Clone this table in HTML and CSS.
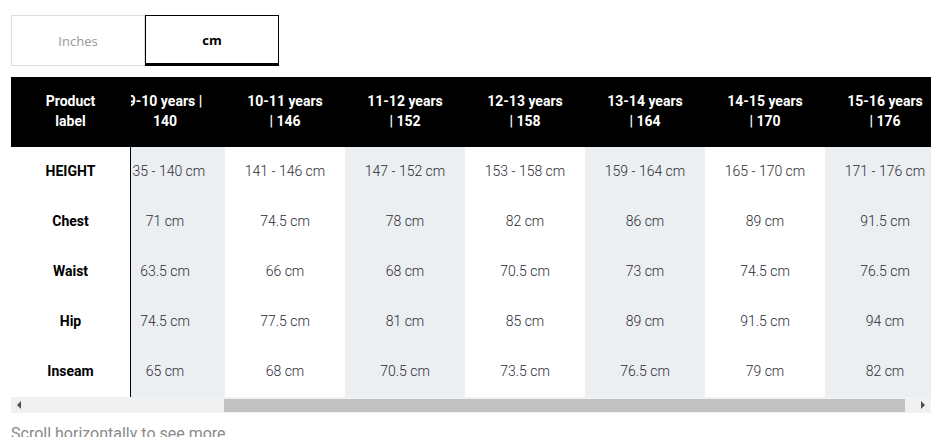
FILE: index.html
```html
<!DOCTYPE html>
<html lang="en">
<head>
<meta charset="utf-8">
<title>Size chart</title>
<link rel="stylesheet" href="styles.css">
</head>
<body>
<div class="page">
  <div class="toggle">
    <button class="opt">Inches</button>
    <button class="opt active">cm</button>
  </div>

  <div class="table">
    <div class="labels">
      <div class="hcell">Product<br>label</div>
      <div class="lcell">HEIGHT</div>
      <div class="lcell">Chest</div>
      <div class="lcell">Waist</div>
      <div class="lcell">Hip</div>
      <div class="lcell">Inseam</div>
    </div>
    <div class="viewport">
      <div class="cols">
        <div class="col grey">
          <div class="hcell">9-10 years |<br>140</div>
          <div class="cell">135 - 140 cm</div>
          <div class="cell">71 cm</div>
          <div class="cell">63.5 cm</div>
          <div class="cell">74.5 cm</div>
          <div class="cell">65 cm</div>
        </div>
        <div class="col">
          <div class="hcell">10-11 years<br>| 146</div>
          <div class="cell">141 - 146 cm</div>
          <div class="cell">74.5 cm</div>
          <div class="cell">66 cm</div>
          <div class="cell">77.5 cm</div>
          <div class="cell">68 cm</div>
        </div>
        <div class="col grey">
          <div class="hcell">11-12 years<br>| 152</div>
          <div class="cell">147 - 152 cm</div>
          <div class="cell">78 cm</div>
          <div class="cell">68 cm</div>
          <div class="cell">81 cm</div>
          <div class="cell">70.5 cm</div>
        </div>
        <div class="col">
          <div class="hcell">12-13 years<br>| 158</div>
          <div class="cell">153 - 158 cm</div>
          <div class="cell">82 cm</div>
          <div class="cell">70.5 cm</div>
          <div class="cell">85 cm</div>
          <div class="cell">73.5 cm</div>
        </div>
        <div class="col grey">
          <div class="hcell">13-14 years<br>| 164</div>
          <div class="cell">159 - 164 cm</div>
          <div class="cell">86 cm</div>
          <div class="cell">73 cm</div>
          <div class="cell">89 cm</div>
          <div class="cell">76.5 cm</div>
        </div>
        <div class="col">
          <div class="hcell">14-15 years<br>| 170</div>
          <div class="cell">165 - 170 cm</div>
          <div class="cell">89 cm</div>
          <div class="cell">74.5 cm</div>
          <div class="cell">91.5 cm</div>
          <div class="cell">79 cm</div>
        </div>
        <div class="col grey">
          <div class="hcell">15-16 years<br>| 176</div>
          <div class="cell">171 - 176 cm</div>
          <div class="cell">91.5 cm</div>
          <div class="cell">76.5 cm</div>
          <div class="cell">94 cm</div>
          <div class="cell">82 cm</div>
        </div>
      </div>
    </div>
  </div>

  <div class="scrollbar">
    <div class="sb-btn"><span class="tri-left"></span></div>
    <div class="sb-track"><div class="sb-thumb"></div></div>
    <div class="sb-btn"><span class="tri-right"></span></div>
  </div>

  <p class="hint">Scroll horizontally to see more</p>
</div>
</body>
</html>
```

FILE: styles.css
```css
* { box-sizing: border-box; }

html, body {
  margin: 0;
  padding: 0;
  background: #fff;
  overflow: hidden;
}

.page {
  width: 920px;
  margin-left: 11px;
  padding-top: 15px;
  font-family: Roboto, "Liberation Sans", sans-serif;
}

.toggle {
  display: flex;
  height: 51px;
}

.opt {
  width: 134px;
  height: 51px;
  background: #fff;
  border: 1px solid #ddd;
  font-family: "Open Sans", "Noto Sans", sans-serif;
  font-size: 13px;
  color: #999;
  padding: 0;
  margin: 0;
  cursor: pointer;
}

.opt.active {
  border: 1px solid #000;
  border-bottom-width: 3px;
  color: #000;
  font-weight: 700;
}

.table {
  display: flex;
  margin-top: 11px;
}

.labels {
  flex: 0 0 120px;
  border-right: 1px solid #000;
}

.hcell {
  height: 70px;
  padding-bottom: 2px;
  background: #000;
  color: #fff;
  font-weight: 700;
  font-size: 14px;
  line-height: 20px;
  display: flex;
  align-items: center;
  justify-content: center;
  text-align: center;
  white-space: nowrap;
}

.lcell {
  height: 50px;
  padding-bottom: 2px;
  display: flex;
  align-items: center;
  justify-content: center;
  font-weight: 700;
  font-size: 14px;
  color: #000;
}

.viewport {
  flex: 1;
  overflow: hidden;
}

.cols {
  display: flex;
  margin-left: -26px;
}

.col {
  flex: 0 0 120px;
  background: #fff;
}

.col.grey { background: #eceff1; }

.cell {
  height: 50px;
  padding-bottom: 2px;
  display: flex;
  align-items: center;
  justify-content: center;
  font-size: 14px;
  font-weight: 300;
  color: #2b2b33;
  white-space: nowrap;
}

.scrollbar {
  display: flex;
  height: 16px;
  background: #f1f1f1;
}

.sb-btn {
  flex: 0 0 16px;
  display: flex;
  align-items: center;
  justify-content: center;
}

.tri-left {
  width: 0;
  height: 0;
  border-top: 4px solid transparent;
  border-bottom: 4px solid transparent;
  border-right: 4px solid #505050;
}

.tri-right {
  width: 0;
  height: 0;
  border-top: 4px solid transparent;
  border-bottom: 4px solid transparent;
  border-left: 4px solid #505050;
}

.sb-track {
  flex: 1;
  display: flex;
  align-items: center;
}

.sb-thumb {
  margin-left: 197px;
  width: 681px;
  height: 13px;
  background: #c1c1c1;
}

.hint {
  margin: 11px 0 0;
  font-size: 16px;
  line-height: 20px;
  color: #8a8a8a;
}
```
